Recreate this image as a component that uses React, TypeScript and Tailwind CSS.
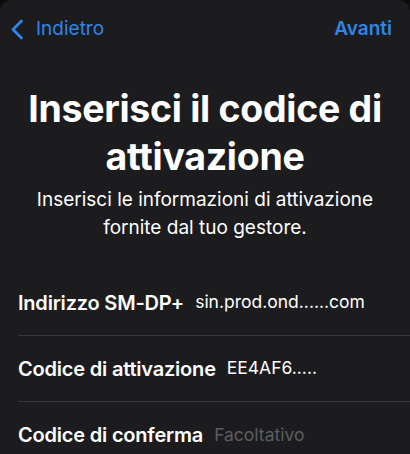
function Row({ label, value, placeholder, last }: { label: string; value?: string; placeholder?: string; last?: boolean }) {
  return (
    <div className="pl-[18px]">
      <div className={`h-[66px] flex items-center gap-[11px] ${last ? "" : "border-b border-[#38383a]"}`}>
        <span className="text-[20px] font-semibold text-white tracking-[-0.2px]">{label}</span>
        {value ? (
          <span className="text-[17.5px] text-white">{value}</span>
        ) : (
          <span className="text-[17.5px] text-[#5c5c60]">{placeholder}</span>
        )}
      </div>
    </div>
  );
}

export default function App() {
  return (
    <div className="w-[410px] h-[454px] bg-[#0c0c0c] overflow-hidden" style={{ fontFamily: "Inter, 'Noto Sans', sans-serif" }}>
      <div className="h-full rounded-t-[12px] bg-[#1c1c1e]">
        <div className="h-[58px] flex items-center justify-between pl-[10px] pr-[18px]">
          <div className="flex items-center gap-[12px] text-[#2f86e6]">
            <svg width="14" height="21" viewBox="0 0 14 21" fill="none">
              <path d="M11.5 2 L3 10.5 L11.5 19" stroke="currentColor" strokeWidth="2.8" strokeLinecap="round" strokeLinejoin="round" />
            </svg>
            <span className="text-[19px]">Indietro</span>
          </div>
          <span className="text-[19px] font-semibold text-[#2f86e6]">Avanti</span>
        </div>
        <div className="pt-[27px] px-2 text-center">
          <h1 className="text-[37.5px] leading-[48px] font-bold text-white tracking-[-0.3px]">
            Inserisci il codice di attivazione
          </h1>
          <p className="mt-[5px] text-[19px] leading-[28px] text-white px-6">
            Inserisci le informazioni di attivazione fornite dal tuo gestore.
          </p>
        </div>
        <div className="mt-[28px]">
          <Row label="Indirizzo SM-DP+" value="sin.prod.ond......com" />
          <Row label="Codice di attivazione" value="EE4AF6....." />
          <Row label="Codice di conferma" placeholder="Facoltativo" last />
        </div>
      </div>
    </div>
  );
}
